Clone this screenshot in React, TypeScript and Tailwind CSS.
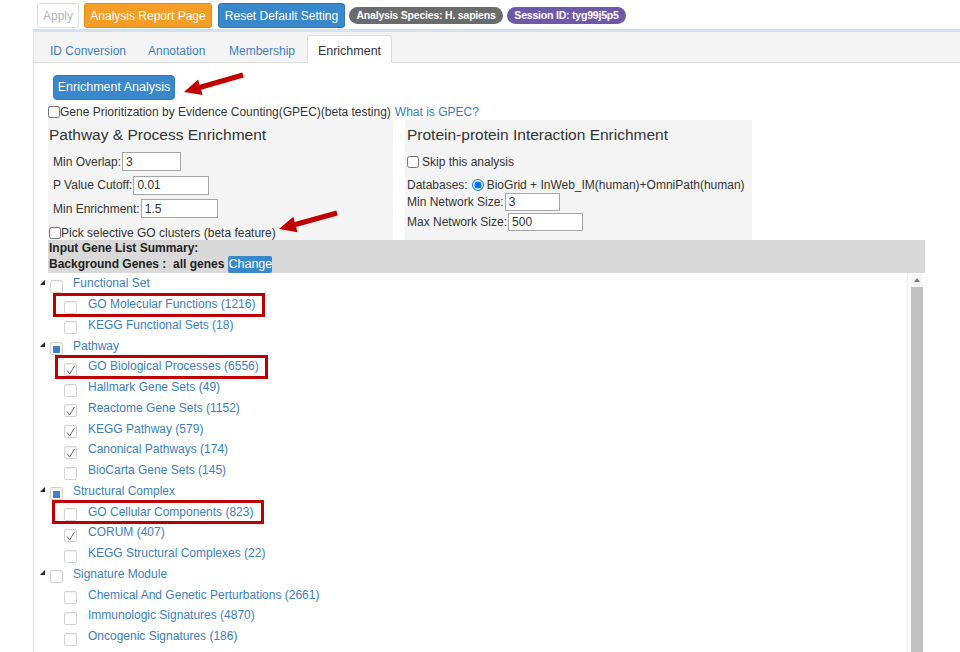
import React from 'react';

type Row = {
    label: string;
    parent?: boolean;
    state: 'none' | 'checked' | 'partial';
    box?: { left: number; w: number };
};

const rows: Row[] = [
    { label: 'Functional Set', parent: true, state: 'none' },
    { label: 'GO Molecular Functions (1216)', state: 'none', box: { left: 19, w: 212 } },
    { label: 'KEGG Functional Sets (18)', state: 'none' },
    { label: 'Pathway', parent: true, state: 'partial' },
    { label: 'GO Biological Processes (6556)', state: 'checked', box: { left: 21, w: 213 } },
    { label: 'Hallmark Gene Sets (49)', state: 'none' },
    { label: 'Reactome Gene Sets (1152)', state: 'checked' },
    { label: 'KEGG Pathway (579)', state: 'checked' },
    { label: 'Canonical Pathways (174)', state: 'checked' },
    { label: 'BioCarta Gene Sets (145)', state: 'none' },
    { label: 'Structural Complex', parent: true, state: 'partial' },
    { label: 'GO Cellular Components (823)', state: 'none', box: { left: 18, w: 212 } },
    { label: 'CORUM (407)', state: 'checked' },
    { label: 'KEGG Structural Complexes (22)', state: 'none' },
    { label: 'Signature Module', parent: true, state: 'none' },
    { label: 'Chemical And Genetic Perturbations (2661)', state: 'none' },
    { label: 'Immunologic Signatures (4870)', state: 'none' },
    { label: 'Oncogenic Signatures (186)', state: 'none' },
];

// thick annotation arrow, tail -> tip
function arrowPoints(x1: number, y1: number, x2: number, y2: number) {
    const dx = x2 - x1;
    const dy = y2 - y1;
    const len = Math.hypot(dx, dy);
    const ux = dx / len, uy = dy / len;
    const nx = -uy, ny = ux;
    const bx = x2 - ux * 17, by = y2 - uy * 17;
    const sw = 2.6, hw = 8;
    const pts = [
        [x1 + nx * sw, y1 + ny * sw],
        [bx + nx * sw, by + ny * sw],
        [bx + nx * hw, by + ny * hw],
        [x2, y2],
        [bx - nx * hw, by - ny * hw],
        [bx - nx * sw, by - ny * sw],
        [x1 - nx * sw, y1 - ny * sw],
    ];
    return pts.map((p) => p.map((v) => v.toFixed(1)).join(',')).join(' ');
}

function TreeBox({ state }: { state: Row['state'] }) {
    return (
        <span className="relative w-[13px] h-[13px] shrink-0 translate-y-[3px] border border-[#d2d2d2] rounded-[2px] bg-white shadow-[inset_0_1px_1px_rgba(0,0,0,0.06)]">
            {state === 'checked' && (
                <svg viewBox="0 0 13 13" className="absolute left-[-1px] top-[-1px] w-[13px] h-[13px]">
                    <path d="M3 7.5 L5.6 11 L10.5 3" fill="none" stroke="#6a6a6a" strokeWidth="1" />
                </svg>
            )}
            {state === 'partial' && (
                <span className="absolute left-[2px] top-[3px] w-[7px] h-[7px] bg-[#3f7fcf]" />
            )}
        </span>
    );
}

export default function App() {
    return (
        <div className="relative w-[960px] h-[652px] overflow-hidden bg-white text-[12px] text-[#333] font-['Liberation_Sans',Arial,sans-serif]">
            {/* top buttons */}
            <div className="flex items-center pl-[37px] pt-[3px] h-[28px]">
                <button className="w-[42px] h-[25px] border border-[#ddd] rounded-[3px] bg-white text-[#b5b5b5]">Apply</button>
                <button className="ml-[5px] w-[128px] h-[25px] border border-[#e38d13] rounded-[3px] bg-[#f59d24] text-white">Analysis Report Page</button>
                <button className="ml-[6px] w-[127px] h-[25px] border border-[#2f74b5] rounded-[3px] bg-[#3a88cc] text-white">Reset Default Setting</button>
                <span className="ml-[4px] w-[154px] h-[17px] flex items-center justify-center rounded-full bg-[#6b6b6b] text-white text-[10.5px] tracking-[-0.2px] font-bold">Analysis Species: H. sapiens</span>
                <span className="ml-[4px] w-[119px] h-[17px] flex items-center justify-center rounded-full bg-[#6c5aa8] text-white text-[10.5px] tracking-[-0.2px] font-bold">Session ID: tyg99j5p5</span>
            </div>

            {/* panel */}
            <div className="ml-[33px] mt-[1px] w-[960px] border-t-[3px] border-l border-t-[#d3e2ef] border-l-[#d8e0e8]">
                <div className="flex items-end h-[31px] pl-[6px] bg-[#f4f4f4] border-b border-[#dcdcdc]">
                    <span className="w-[98px] h-[27px] pt-[4px] pl-[10px] flex items-center text-[#3c80c2]">ID Conversion</span>
                    <span className="w-[81px] h-[27px] pt-[4px] pl-[10px] flex items-center text-[#3c80c2]">Annotation</span>
                    <span className="w-[88px] h-[27px] pt-[4px] pl-[10px] flex items-center text-[#3c80c2]">Membership</span>
                    <span className="w-[85px] h-[28px] pt-[4px] -mb-px flex items-center justify-center bg-white border border-b-0 border-[#dcdcdc] rounded-t-[3px] text-[#333] text-[12.5px]">Enrichment</span>
                </div>

                <div className="pl-[14px]">
                    <button className="mt-[12px] ml-[5px] w-[122px] h-[25px] rounded-[4px] bg-[#3a88cc] border border-[#3079bb] text-white text-[12.5px]">Enrichment Analysis</button>
                    <div className="flex items-center h-[16px] mt-[4px]">
                        <input type="checkbox" className="m-0 w-[12px] h-[12px]" />
                        <span className="ml-[0px]">Gene Prioritization by Evidence Counting(GPEC)(beta testing)</span>
                        <span className="ml-[4px] text-[#3c80c2]">What is GPEC?</span>
                    </div>

                    <div className="flex">
                        <div className="w-[345px] h-[120px] bg-[#f4f4f4]">
                            <div className="text-[15.5px] leading-[20px] pt-[5px] pl-[1px]">Pathway &amp; Process Enrichment</div>
                            <div className="pl-[5px] mt-[5px] flex flex-col">
                                <div className="flex items-center h-[23.5px]">
                                    <span>Min Overlap:</span>
                                    <input defaultValue="3" className="ml-[1px] w-[59px] h-[19px] px-[3px] border border-[#a6a6a6] bg-white text-[12px] outline-none" />
                                </div>
                                <div className="flex items-center h-[23.5px]">
                                    <span>P Value Cutoff:</span>
                                    <input defaultValue="0.01" className="ml-[1px] w-[76px] h-[19px] px-[3px] border border-[#a6a6a6] bg-white text-[12px] outline-none" />
                                </div>
                                <div className="flex items-center h-[23.5px]">
                                    <span>Min Enrichment:</span>
                                    <input defaultValue="1.5" className="ml-[1px] w-[77px] h-[19px] px-[3px] border border-[#a6a6a6] bg-white text-[12px] outline-none" />
                                </div>
                            </div>
                            <div className="flex items-center h-[16px] mt-[4px] pl-[1px]">
                                <input type="checkbox" className="m-0 w-[12px] h-[12px]" />
                                <span>Pick selective GO clusters (beta feature)</span>
                            </div>
                        </div>

                        <div className="ml-[12px] w-[347px] h-[120px] bg-[#f4f4f4] pl-[2px]">
                            <div className="text-[15.5px] leading-[20px] pt-[5px]">Protein-protein Interaction Enrichment</div>
                            <div className="flex items-center h-[18px] mt-[8px]">
                                <input type="checkbox" className="m-0 w-[12px] h-[12px]" />
                                <span className="ml-[3px]">Skip this analysis</span>
                            </div>
                            <div className="flex items-center h-[16px] mt-[6px]">
                                <span>Databases:</span>
                                <input type="radio" defaultChecked className="ml-[4px] m-0 w-[12px] h-[12px]" />
                                <span className="ml-[3px]">BioGrid + InWeb_IM(human)+OmniPath(human)</span>
                            </div>
                            <div className="flex items-center h-[18px]">
                                <span>Min Network Size:</span>
                                <input defaultValue="3" className="ml-[1px] w-[55px] h-[18px] px-[3px] border border-[#a6a6a6] bg-white text-[12px] outline-none" />
                            </div>
                            <div className="flex items-center h-[19px] mt-[1px]">
                                <span>Max Network Size:</span>
                                <input defaultValue="500" className="ml-[1px] w-[75px] h-[18px] px-[3px] border border-[#a6a6a6] bg-white text-[12px] outline-none" />
                            </div>
                        </div>
                    </div>

                    <div className="w-[877px] h-[33px] bg-[#d9d9d9] pl-[1px] font-bold text-[#222]">
                        <div className="leading-[14px] pt-[1px]">Input Gene List Summary:</div>
                        <div className="flex items-center h-[18px]">
                            <span>Background Genes :&nbsp; all genes</span>
                            <span className="ml-[4px] w-[44px] h-[17px] flex items-center justify-center bg-[#3a88cc] text-white text-[12.5px] font-normal rounded-[2px]">Change</span>
                        </div>
                    </div>
                </div>

                {/* tree */}
                <div className="flex w-[891px]">
                    <div className="flex-1">
                        {rows.map((r) => (
                            <div key={r.label} className={'relative flex items-center h-[20.75px] ' + (r.parent ? 'pl-[6px]' : 'pl-[30px]')}>
                                {r.parent && (
                                    <svg viewBox="0 0 5 5" className="w-[5px] h-[5px] mr-[5px] -translate-y-[1px]">
                                        <polygon points="5,0 5,5 0,5" fill="#222" />
                                    </svg>
                                )}
                                <TreeBox state={r.state} />
                                <span className={(r.parent ? 'ml-[10px]' : 'ml-[11px]') + ' text-[#3c80c2]'}>{r.label}</span>
                                {r.box && (
                                    <span
                                        className="absolute top-[-1px] h-[24px] border-[3px] border-[#c00000]"
                                        style={{ left: r.box.left, width: r.box.w }}
                                    />
                                )}
                            </div>
                        ))}
                    </div>
                    <div className="w-[18px] border-l border-[#eeeeee] flex flex-col items-start">
                        <div className="ml-[3px] w-[12px] h-[14px] flex items-center justify-center bg-[#f6f6f6]">
                            <svg viewBox="0 0 6 4" className="w-[6px] h-[4px]">
                                <polygon points="3,0 6,4 0,4" fill="#777" />
                            </svg>
                        </div>
                        <div className="ml-[3px] w-[12px] h-[400px] bg-[#c1c1c1]" />
                    </div>
                </div>
            </div>

            {/* annotation arrows */}
            <svg className="absolute inset-0 w-[960px] h-[652px] pointer-events-none" viewBox="0 0 960 652">
                <polygon points={arrowPoints(243, 75, 184, 92)} fill="#c00000" />
                <polygon points={arrowPoints(337, 213, 279, 229)} fill="#c00000" />
            </svg>
        </div>
    );
}
